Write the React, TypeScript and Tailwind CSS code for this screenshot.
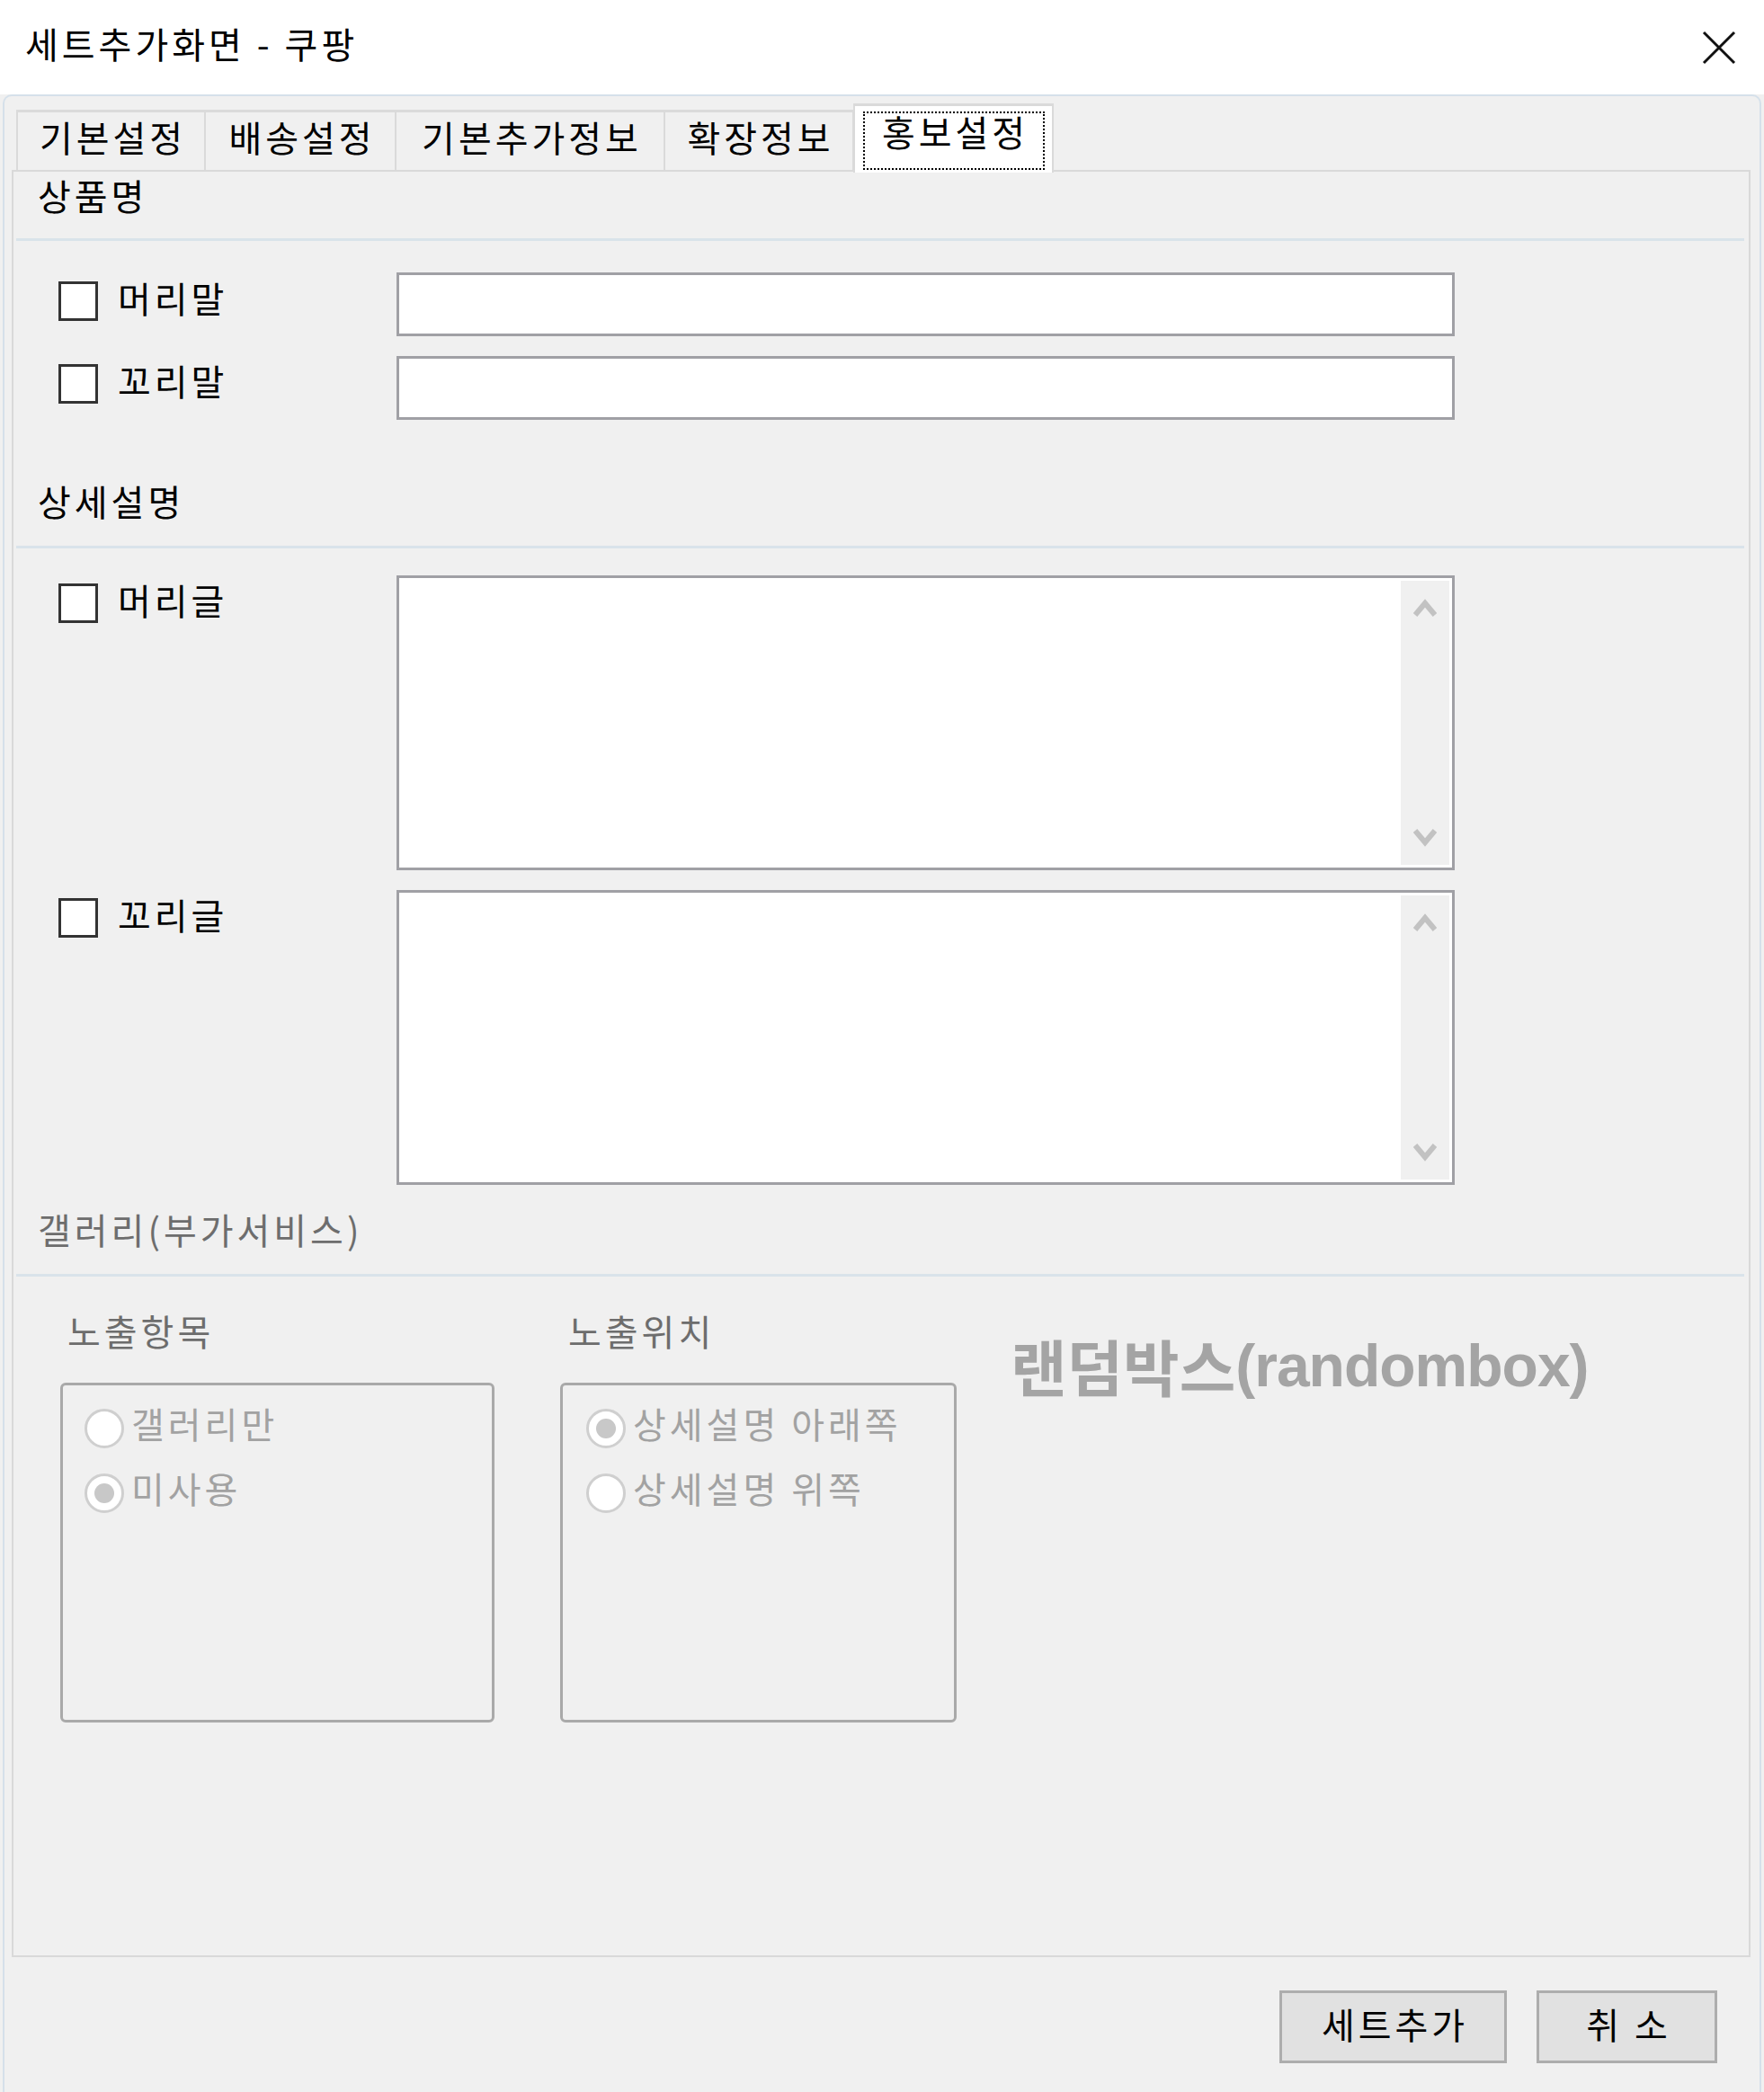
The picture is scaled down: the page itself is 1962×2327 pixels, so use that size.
const KR = "font-['Noto_Sans_CJK_KR',sans-serif]"

function CheckBox() {
  return <div className="w-[44px] h-[44px] shrink-0 border-[3px] border-[#333333] bg-white" />
}

function Chevron({ down }: { down?: boolean }) {
  return (
    <svg width="26" height="22" viewBox="0 0 26 22">
      <path
        d={down ? "M2 4 L13 17 L24 4" : "M2 18 L13 5 L24 18"}
        fill="none"
        stroke="#c2c2c2"
        strokeWidth="6"
      />
    </svg>
  )
}

function TextArea() {
  return (
    <div className="w-[1177px] h-[328px] border-[3px] border-[#a0a0a5] bg-white flex justify-end p-[3px]">
      <div className="w-[54px] h-full bg-[#f0f0f0] flex flex-col items-center justify-between py-[20px]">
        <Chevron />
        <Chevron down />
      </div>
    </div>
  )
}

function Radio({ checked }: { checked?: boolean }) {
  return (
    <div className="w-[44px] h-[44px] shrink-0 rounded-full border-[3px] border-[#cfcfcf] bg-white flex items-center justify-center">
      {checked && <div className="w-[22px] h-[22px] rounded-full bg-[#c8c8c8]" />}
    </div>
  )
}

function SectionHeader({ label, pt, h, gray }: { label: string; pt: string; h: string; gray?: boolean }) {
  return (
    <div className={h}>
      <div className={`${pt} pl-[27px] text-[40px] leading-[40px] ${gray ? "text-[#6d6d6d]" : "text-black"}`}>{label}</div>
    </div>
  )
}

function Separator() {
  return <div className="h-[3px] ml-[3px] mr-[5px] bg-[#d9e3ea]" />
}

function CheckLabel({ label, mt }: { label: string; mt: string }) {
  return (
    <div className={`w-[426px] pl-[50px] ${mt} h-[44px] flex items-center gap-[22px] text-[40px] leading-[40px] text-black`}>
      <CheckBox />
      <span className="pb-[8px]">{label}</span>
    </div>
  )
}

export default function App() {
  const tabs = [
    { label: "기본설정", w: "w-[211px]" },
    { label: "배송설정", w: "w-[212px]" },
    { label: "기본추가정보", w: "w-[299px]" },
    { label: "확장정보", w: "w-[210px]" },
  ]

  return (
    <div className={`w-[1962px] h-[2327px] bg-[#f0f0f0] flex flex-col overflow-hidden tracking-[4px] ${KR}`}>
      {/* title bar */}
      <div className="h-[105px] bg-white flex items-center justify-between pl-[28px] pr-[30px] shrink-0">
        <div className="pb-[10px] text-[40px] leading-[40px] text-black">세트추가화면 - 쿠팡</div>
        <svg width="40" height="40" viewBox="0 0 40 40">
          <path d="M3 3 L37 37 M37 3 L3 37" stroke="#111111" strokeWidth="3" />
        </svg>
      </div>

      {/* window body */}
      <div className="flex-1 mx-[3px] border-t-[2px] border-x-[2px] border-[#d5e0ea] rounded-t-[10px] bg-[#f0f0f0] flex flex-col">
        {/* tab strip */}
        <div className="h-[82px] flex items-end pl-[13px] pr-[10px] relative z-10">
          {tabs.map((t) => (
            <div
              key={t.label}
              className={`${t.w} h-[67px] border-t-[3px] border-r-[2px] border-[#dadada] first:border-l-[2px] flex items-center justify-center pb-[10px] pl-[4px] text-[40px] leading-[40px] text-black`}
            >
              {t.label}
            </div>
          ))}
          <div className="w-[223px] h-[77px] -ml-[1px] mb-[-3px] bg-white border-t-[3px] border-x-[2px] border-[#dadada] flex justify-center pt-[6px]">
            <div className="w-[202px] h-[65px] border-[2px] border-dotted border-black flex justify-center pl-[4px] text-[40px] leading-[40px] text-black">
              홍보설정
            </div>
          </div>
        </div>

        {/* tab panel */}
        <div className="h-[1988px] ml-[8px] mr-[10px] border-[2px] border-[#d9d9d9] flex flex-col">
          <SectionHeader label="상품명" pt="pt-[6px]" h="h-[74px]" />
          <Separator />

          <div className="flex mt-[35px] h-[71px]">
            <CheckLabel label="머리말" mt="mt-[10px]" />
            <div className="w-[1177px] h-[71px] border-[3px] border-[#a0a0a5] bg-white" />
          </div>
          <div className="flex mt-[22px] h-[71px]">
            <CheckLabel label="꼬리말" mt="mt-[9px]" />
            <div className="w-[1177px] h-[71px] border-[3px] border-[#a0a0a5] bg-white" />
          </div>

          <SectionHeader label="상세설명" pt="pt-[70px]" h="h-[140px]" />
          <Separator />

          <div className="flex mt-[30px]">
            <CheckLabel label="머리글" mt="mt-[9px]" />
            <TextArea />
          </div>
          <div className="flex mt-[22px]">
            <CheckLabel label="꼬리글" mt="mt-[9px]" />
            <TextArea />
          </div>

          <SectionHeader label="갤러리(부가서비스)" pt="pt-[29px]" h="h-[99px]" gray />
          <Separator />

          <div className="flex pl-[52px]">
            <div className="w-[483px] flex flex-col">
              <div className="mt-[40px] pl-[8px] text-[40px] leading-[40px] text-[#6d6d6d]">노출항목</div>
              <div className="mt-[38px] h-[378px] border-[3px] border-[#a9a9a9] rounded-[6px] pt-[12px] pl-[24px] text-[40px] leading-[40px] text-[#a2a2a2]">
                <div className="h-[72px] flex items-center gap-[8px]">
                  <Radio />
                  <span className="pb-[12px]">갤러리만</span>
                </div>
                <div className="h-[72px] flex items-center gap-[8px]">
                  <Radio checked />
                  <span className="pb-[12px]">미사용</span>
                </div>
              </div>
            </div>

            <div className="w-[441px] ml-[73px] flex flex-col">
              <div className="mt-[40px] pl-[9px] text-[40px] leading-[40px] text-[#6d6d6d]">노출위치</div>
              <div className="mt-[38px] h-[378px] border-[3px] border-[#a9a9a9] rounded-[6px] pt-[12px] pl-[26px] text-[40px] leading-[40px] text-[#a2a2a2]">
                <div className="h-[72px] flex items-center gap-[8px]">
                  <Radio checked />
                  <span className="pb-[12px]">상세설명 아래쪽</span>
                </div>
                <div className="h-[72px] flex items-center gap-[8px]">
                  <Radio />
                  <span className="pb-[12px]">상세설명 위쪽</span>
                </div>
              </div>
            </div>

            <div className="ml-[60px] mt-[64px] h-[70px] flex items-center leading-[70px] font-bold text-[#a4a4a4] tracking-normal">
              <span className="text-[68px]">랜덤박스</span>
              <span className="text-[66px] font-['Liberation_Sans',sans-serif] tracking-[-1px]">(randombox)</span>
            </div>
          </div>
        </div>

        {/* buttons */}
        <div className="flex justify-end gap-[33px] mt-[37px] pr-[47px]">
          <button className="w-[253px] h-[81px] pb-[8px] pl-[4px] bg-[#e1e1e1] border-[3px] border-[#adadad] text-[40px] leading-[40px] text-black">
            세트추가
          </button>
          <button className="w-[201px] h-[81px] pb-[8px] pl-[4px] bg-[#e1e1e1] border-[3px] border-[#adadad] text-[40px] leading-[40px] text-black">
            취 소
          </button>
        </div>
      </div>
    </div>
  )
}
